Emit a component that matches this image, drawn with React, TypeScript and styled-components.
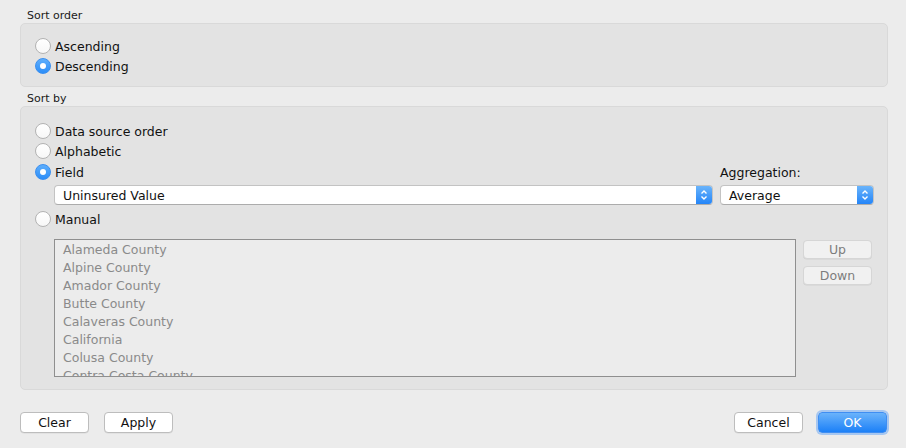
import React from "react";
import styled, { createGlobalStyle } from "styled-components";

const Global = createGlobalStyle`
  html, body { margin: 0; padding: 0; background: #ececec; }
  body { font-family: "DejaVu Sans", "Liberation Sans", sans-serif; color: #111; }
  * { box-sizing: border-box; }
`;

const Page = styled.div`
  width: 906px;
  height: 448px;
  padding: 1px 18px 0 20px;
  display: flex;
  flex-direction: column;
  background: #ececec;
`;

const GroupLabel = styled.div<{ $top: number }>`
  font-size: 11px;
  line-height: 14px;
  padding: ${(p) => p.$top}px 0 0 7px;
  height: ${(p) => p.$top + 14}px;
  color: #1a1a1a;
`;

const GroupBox = styled.div<{ $height: number; $padTop: number }>`
  height: ${(p) => p.$height}px;
  background: #e3e3e3;
  border: 1px solid #d9d9d9;
  border-radius: 5px;
  padding: ${(p) => p.$padTop}px 13px 0 14px;
  display: flex;
  flex-direction: column;
`;

const RadioRow = styled.label<{ $h?: number; $mt?: number }>`
  display: flex;
  align-items: center;
  gap: 4px;
  height: ${(p) => p.$h ?? 20}px;
  margin-top: ${(p) => p.$mt ?? 0}px;
  font-size: 12.5px;
`;

const RadioDot = styled.span<{ $on?: boolean }>`
  width: 16px;
  height: 16px;
  border-radius: 50%;
  flex: none;
  display: flex;
  align-items: center;
  justify-content: center;
  background: ${(p) =>
    p.$on ? "linear-gradient(#5eaefc, #2d8ef8)" : "linear-gradient(#ffffff, #f7f7f7)"};
  border: 1px solid ${(p) => (p.$on ? "#3a8ff0" : "#b3b3b3")};
  &::after {
    content: "";
    display: ${(p) => (p.$on ? "block" : "none")};
    width: 6px;
    height: 6px;
    border-radius: 50%;
    background: #fff;
  }
`;

const Radio = ({ label, on, h, mt }: { label: string; on?: boolean; h?: number; mt?: number }) => (
  <RadioRow $h={h} $mt={mt}>
    <RadioDot $on={on} />
    <span>{label}</span>
  </RadioRow>
);

const FieldGrid = styled.div`
  display: grid;
  grid-template-columns: 1fr 154px;
  column-gap: 7px;
  grid-template-rows: 22px 20px;
  row-gap: 2px;
`;

const AggLabel = styled.div`
  font-size: 12.5px;
  display: flex;
  align-items: center;
`;

const SelectBox = styled.div<{ $indent?: number }>`
  margin-left: ${(p) => p.$indent ?? 0}px;
  height: 20px;
  background: #fff;
  border: 1px solid #c3c3c3;
  border-bottom-color: #acacac;
  border-radius: 4px;
  display: flex;
  align-items: stretch;
  overflow: hidden;
  font-size: 12.5px;
`;

const SelectText = styled.div`
  flex: 1;
  padding-left: 8px;
  display: flex;
  align-items: center;
`;

const SelectArrow = styled.div`
  width: 16px;
  background: linear-gradient(#6ab4fb, #2485f8);
  display: flex;
  align-items: center;
  justify-content: center;
`;

const Chevrons = () => (
  <svg width="8" height="12" viewBox="0 0 8 12" fill="none">
    <path d="M1.5 4.5 L4 2 L6.5 4.5" stroke="#fff" strokeWidth="1.4" />
    <path d="M1.5 7.5 L4 10 L6.5 7.5" stroke="#fff" strokeWidth="1.4" />
  </svg>
);

const Select = ({ value, indent }: { value: string; indent?: number }) => (
  <SelectBox $indent={indent}>
    <SelectText>{value}</SelectText>
    <SelectArrow>
      <Chevrons />
    </SelectArrow>
  </SelectBox>
);

const ListRow = styled.div`
  margin: 10px 0 0 19px;
  display: flex;
  gap: 7px;
  align-items: flex-start;
`;

const ListBox = styled.div`
  width: 742px;
  height: 138px;
  border: 1px solid #8f8f8f;
  background: #ececec;
  padding: 1px 0 0 8px;
  overflow: hidden;
`;

const ListItem = styled.div`
  font-size: 12.5px;
  line-height: 18px;
  color: #8a8a8a;
  white-space: nowrap;
`;

const SideButtons = styled.div`
  display: flex;
  flex-direction: column;
  gap: 7px;
  padding-top: 1px;
`;

const Button = styled.button<{ $variant?: "normal" | "disabled" | "primary" }>`
  width: 69px;
  height: ${(p) => (p.$variant === "disabled" ? 19 : 21)}px;
  border-radius: 4px;
  font-family: "DejaVu Sans", "Liberation Sans", sans-serif;
  font-size: 12.5px;
  padding: 0;
  display: flex;
  align-items: center;
  justify-content: center;
  border: 1px solid
    ${(p) =>
      p.$variant === "primary" ? "#3f8ef2" : p.$variant === "disabled" ? "#d6d6d6" : "#bdbdbd"};
  background: ${(p) =>
    p.$variant === "primary"
      ? "linear-gradient(#6ab3fb, #1c80f7)"
      : p.$variant === "disabled"
      ? "#f1f1f1"
      : "#ffffff"};
  color: ${(p) => (p.$variant === "primary" ? "#fff" : p.$variant === "disabled" ? "#7d7d7d" : "#111")};
  box-shadow: ${(p) =>
    p.$variant === "primary" ? "0 0 0 2px rgba(110,170,245,0.55)" : "0 0.5px 0 rgba(0,0,0,0.08)"};
`;

const Footer = styled.div`
  display: flex;
  justify-content: space-between;
  padding: 22px 1px 0 0;
`;

const ButtonGroup = styled.div`
  display: flex;
  gap: 15px;
`;

const counties = [
  "Alameda County",
  "Alpine County",
  "Amador County",
  "Butte County",
  "Calaveras County",
  "California",
  "Colusa County",
  "Contra Costa County",
];

export default function App() {
  return (
    <>
      <Global />
      <Page>
        <GroupLabel $top={8}>Sort order</GroupLabel>
        <GroupBox $height={64} $padTop={12}>
          <Radio label="Ascending" />
          <Radio label="Descending" on />
        </GroupBox>
        <GroupLabel $top={5}>Sort by</GroupLabel>
        <GroupBox $height={284} $padTop={14}>
          <Radio label="Data source order" />
          <Radio label="Alphabetic" />
          <FieldGrid>
            <Radio label="Field" on h={22} />
            <AggLabel>Aggregation:</AggLabel>
            <Select value="Uninsured Value" indent={19} />
            <Select value="Average" />
          </FieldGrid>
          <Radio label="Manual" mt={4} />
          <ListRow>
            <ListBox>
              {counties.map((c) => (
                <ListItem key={c}>{c}</ListItem>
              ))}
            </ListBox>
            <SideButtons>
              <Button $variant="disabled">Up</Button>
              <Button $variant="disabled">Down</Button>
            </SideButtons>
          </ListRow>
        </GroupBox>
        <Footer>
          <ButtonGroup>
            <Button>Clear</Button>
            <Button>Apply</Button>
          </ButtonGroup>
          <ButtonGroup>
            <Button>Cancel</Button>
            <Button $variant="primary">OK</Button>
          </ButtonGroup>
        </Footer>
      </Page>
    </>
  );
}
